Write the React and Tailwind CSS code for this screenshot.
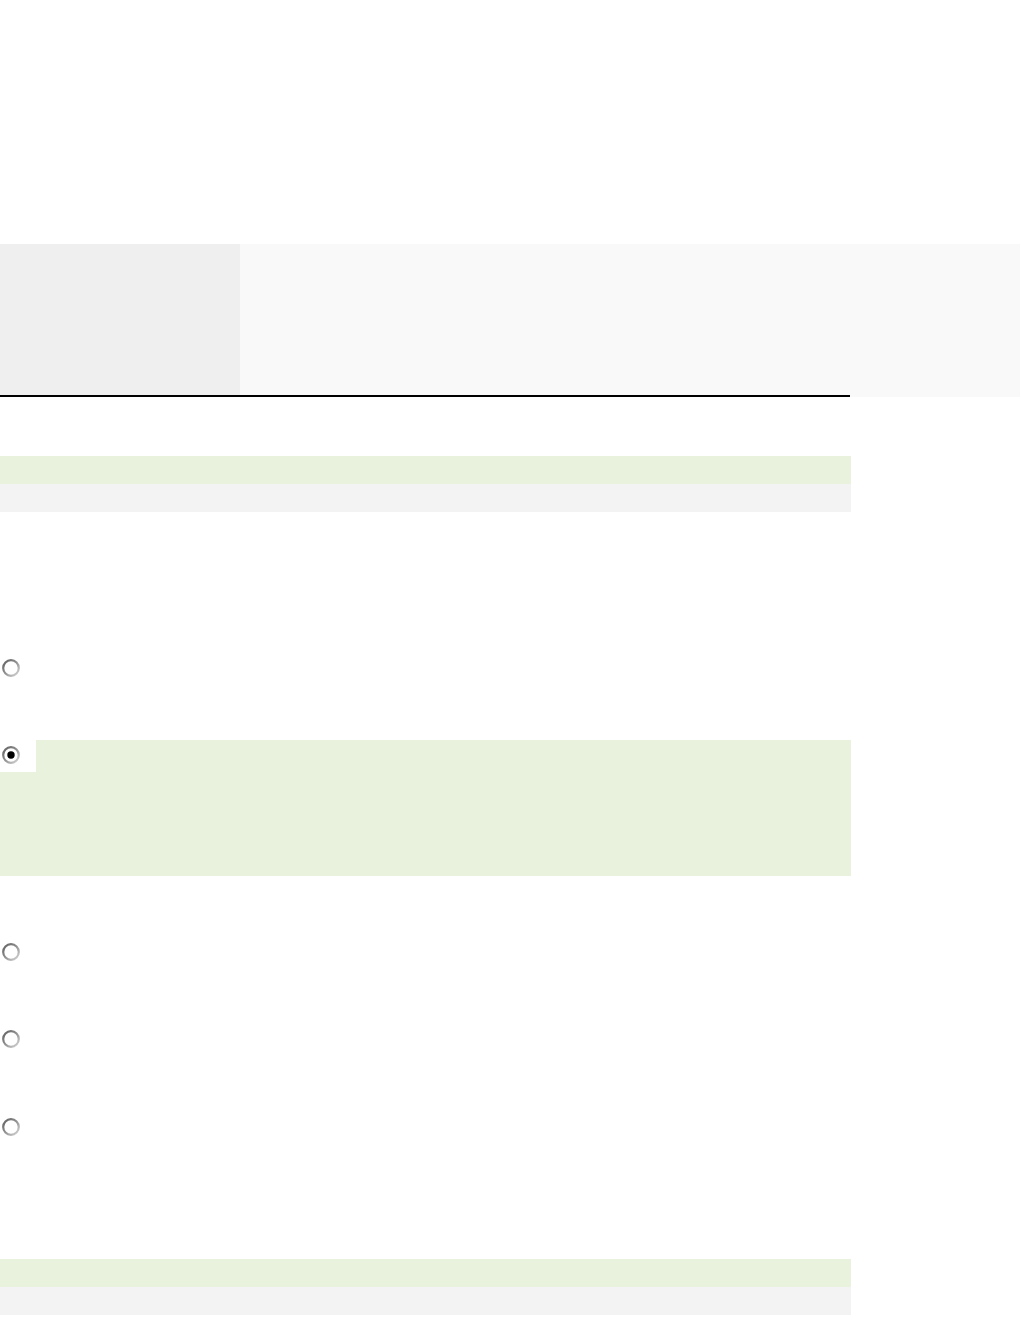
import React from "react";

function Radio({ checked }) {
  const id = checked ? "rg1" : "rg0";
  return (
    <svg width="18" height="18" viewBox="0 0 18 18" className="block">
      <defs>
        <linearGradient id={id} x1="0" y1="0" x2="1" y2="1">
          <stop offset="0" stopColor="#5f5f5f" />
          <stop offset="0.45" stopColor="#8c8c8c" />
          <stop offset="1" stopColor="#d8d8d8" />
        </linearGradient>
      </defs>
      <circle cx="9" cy="9" r="7.8" fill="#ffffff" stroke={`url(#${id})`} strokeWidth="2.2" />
      {checked && <circle cx="9" cy="9" r="3.7" fill="#000000" />}
    </svg>
  );
}

export default function App() {
  return (
    <div className="w-[1021px] min-h-[1343px] bg-white font-['Liberation_Sans',sans-serif]">
      <div className="h-[244px]" />
      <div className="flex w-[1020px] bg-[#f9f9f9]">
        <div className="w-[850px] border-b-2 border-black flex">
          <div className="w-[240px] h-[151px] bg-[#efefef]" />
        </div>
      </div>
      <div className="w-[851px] mt-[59px]">
        <div className="h-[28px] bg-[#e8f2dc]" />
        <div className="h-[28px] bg-[#f3f3f3]" />
      </div>
      <div className="w-[851px] mt-[147px] pl-[2px]">
        <Radio />
      </div>
      <div className="w-[851px] mt-[63px] h-[136px] bg-[#e8f2dc]">
        <div className="w-[36px] h-[32px] bg-white pt-[6px] pl-[2px]">
          <Radio checked />
        </div>
      </div>
      <div className="w-[851px] mt-[67px] pl-[2px]">
        <Radio />
      </div>
      <div className="w-[851px] mt-[69px] pl-[2px]">
        <Radio />
      </div>
      <div className="w-[851px] mt-[70px] pl-[2px]">
        <Radio />
      </div>
      <div className="w-[851px] mt-[123px]">
        <div className="h-[28px] bg-[#e8f2dc]" />
        <div className="h-[28px] bg-[#f3f3f3]" />
      </div>
    </div>
  );
}
